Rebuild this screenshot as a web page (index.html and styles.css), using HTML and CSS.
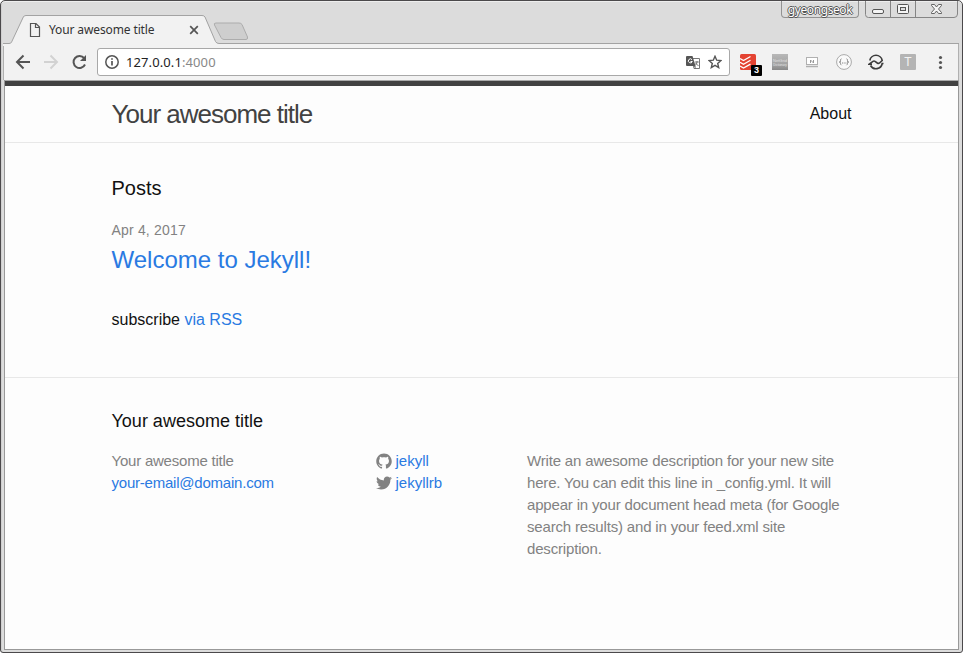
FILE: index.html
```html
<!DOCTYPE html>
<html lang="en">
<head>
<meta charset="utf-8">
<title>Your awesome title</title>
<link rel="stylesheet" href="styles.css">
</head>
<body>
<div class="window">
  <div class="titlebar">
    <svg class="tabs" width="260" height="31" viewBox="0 0 260 31">
      <path d="M0 31V28.500H7.500L20.800 2Q21.500 .5 23.500 .5H199Q201 .5 201.800 2L212.500 26.500Q213.500 28.500 216 28.500H260V31Z" fill="#f2f2f2"/>
      <path d="M0 28.500H6Q8 28.500 8.600 27L20.300 2Q21 .5 23 .5H199Q201.200 .5 202 2L212.500 26.500Q213.500 28.500 216 28.500H260" fill="none" stroke="#a3a3a3"/>
      <path d="M213 8H236Q238 8 239 9.500L244.500 22Q245 24.500 243 24.500H221Q219 24.500 218 22.500L211.500 10Q210.500 8 213 8Z" fill="#cecece" stroke="#acacac"/>
    </svg>
    <div class="tab">
      <svg width="12" height="16" viewBox="0 0 12 16" fill="none" stroke="#555" stroke-width="1.2"><path d="M1.500 1.500H7L10.500 5V14.500H1.500ZM6.500 1.500V5.500H10.500"/></svg>
      <span class="tab-name">Your awesome title</span>
      <svg width="10" height="10" viewBox="0 0 10 10" stroke="#555" stroke-width="1.700"><path d="M1.200 1.200l7.600 7.600M8.800 1.200L1.200 8.800"/></svg>
    </div>
    <div class="profile">gyeongseok</div>
    <div class="controls">
      <svg width="93" height="18" viewBox="0 0 93 18" fill="none" stroke="#858585">
        <path d="M.5 0V13.500Q.5 16.500 3.500 16.500H89Q92.500 16.500 92.500 13V0M25.500 0V16M50.500 0V16"/>
        <rect x="7.500" y="8.500" width="11" height="4" rx="1.500" fill="#f4f4f4" stroke="#555"/>
        <rect x="32.500" y="3.500" width="11" height="9" rx="1" fill="#f4f4f4" stroke="#555"/><rect x="35.500" y="6.500" width="5" height="3" fill="#ddd" stroke="#555"/>
        <path d="M66.500 3.500h3l2 2.500 2-2.500h3v1l-3 3.500 3 3.500v1h-3l-2-2.500-2 2.500h-3v-1l3-3.500-3-3.500z" fill="#f4f4f4" stroke="#555" stroke-width=".9"/>
      </svg>
    </div>
  </div>
  <div class="toolbar">
    <svg class="nav-icons" width="76" height="20" viewBox="0 0 76 20" fill="none" stroke="#555" stroke-width="2">
      <path d="M16 10H3.500M9.500 3.500L3 10l6.500 6.500"/>
      <path d="M30 10h12.500M36.500 3.500L43 10l-6.500 6.500" stroke="#d2d2d2"/>
      <path d="M70.200 6.200A6 6 0 1 0 71 12.500"/><path d="M72 3v6h-6z" fill="#555" stroke="none"/>
    </svg>
    <div class="omnibox">
      <svg width="14" height="14" viewBox="0 0 14 14" fill="none" stroke="#555" stroke-width="1.500"><circle cx="7" cy="7" r="6.200"/><path d="M7 6v4.500M7 3.200v1.600" stroke-width="1.700"/></svg>
      <span class="url">127.0.0.1<span class="port">:4000</span></span>
      <svg class="translate" width="14" height="13" viewBox="0 0 14 13"><path d="M6 2.500h7.500v10H8z" fill="#fff" stroke="#777"/><path d="M0 1q0-1 1-1h5.500l3 10H1q-1 0-1-1z" fill="#555"/><path d="M8 10l1.500 3V10z" fill="#555"/><path d="M6 3.700A2 2 0 1 0 6.300 5.500H4.500" fill="none" stroke="#fff"/><path d="M8.800 6h4M11 5v1q0 2-2 3.500M9.500 7l3 3" fill="none" stroke="#666" stroke-width=".9"/></svg>
      <svg class="star" width="14" height="14" viewBox="0 0 14 14"><path d="M7 1.300l1.700 3.900 4.200.4-3.200 2.800 1 4.200L7 10.400l-3.700 2.200 1-4.200L1.100 5.600l4.200-.4z" fill="none" stroke="#555" stroke-width="1.400"/></svg>
    </div>
    <div class="extensions">
      <div class="todo"><svg width="16" height="16" viewBox="0 0 16 16"><rect width="16" height="16" rx="1.500" fill="#e44332"/><path d="M0 4.500l3.500 2 7-4M0 8.300l3.500 2 7-4M0 12.100l3.500 2 7-4" fill="none" stroke="#fff" stroke-width="1.300"/></svg><span class="badge">3</span></div>
      <svg class="dictionary" width="16" height="16" viewBox="0 0 16 16"><g fill="#e2e2e2" font-family="Liberation Sans" text-anchor="middle"><text x="8" y="7.500" font-size="4">NetGrid</text><text x="8" y="11.500" font-size="3">Dictionary</text></g></svg>
      <svg width="16" height="16" viewBox="0 0 16 16" fill="none" stroke="#b0b0b0"><rect x="2.500" y="3.500" width="11" height="7" fill="#fff"/><path d="M2 12.500h12" stroke-width="1.500"/><path d="M6.500 9V6l3 3V6" stroke="#999"/></svg>
      <svg width="16" height="16" viewBox="0 0 16 16" fill="none" stroke="#aaa"><circle cx="8" cy="8" r="7.400" fill="#fafafa"/><path d="M5.500 4.800Q4.300 5 4.500 6.700T3.300 8q1.200 0 1.200 1.300t1 1.900M10.500 4.800q1.200.2 1 1.900T12.700 8q-1.200 0-1.200 1.300t-1 1.900" stroke="#888"/><path d="M6 9h1M7.700 9h1M9.400 9h1" stroke="#888"/></svg>
      <svg width="16" height="16" viewBox="0 0 16 16" fill="none" stroke="#3c3c3c" stroke-width="1.600"><path d="M1.800 6.500A6.300 6.300 0 0 1 14.200 6.500L11.500 9Q10.500 9.800 9.300 9L7 7.300Q6 6.600 5 7.300L.8 10.300H4M2.500 11.500A6.300 6.300 0 0 0 14.200 9.500H15.500"/></svg>
      <div class="t-icon">T</div>
      <svg width="16" height="16" viewBox="0 0 16 16" fill="#555"><circle cx="8.500" cy="3.500" r="1.600"/><circle cx="8.500" cy="8.500" r="1.600"/><circle cx="8.500" cy="13.500" r="1.600"/></svg>
    </div>
  </div>
  <div class="page">
    <header class="site-header"><div class="wrapper header-row">
      <a class="site-title">Your awesome title</a><nav>About</nav>
    </div></header>
    <main class="wrapper content">
      <h1>Posts</h1>
      <div class="post-meta">Apr 4, 2017</div>
      <h2><a>Welcome to Jekyll!</a></h2>
      <p class="rss">subscribe <a>via RSS</a></p>
    </main>
    <footer><div class="wrapper">
      <h3>Your awesome title</h3>
      <div class="columns">
        <div class="contact">Your awesome title<br><a>your-email@domain.com</a></div>
        <div>
          <div class="social"><svg width="16" height="16" viewBox="0 0 16 16"><path fill="#828282" d="M7.999,0.431c-4.285,0-7.760,3.474-7.760,7.761 c0,3.428,2.223,6.337,5.307,7.363c0.388,0.071,0.530-0.168,0.530-0.374c0-0.184-0.007-0.672-0.010-1.320 c-2.159,0.469-2.614-1.040-2.614-1.040c-0.353-0.896-0.862-1.135-0.862-1.135c-0.705-0.481,0.053-0.472,0.053-0.472 c0.779,0.055,1.189,0.800,1.189,0.800c0.692,1.186,1.816,0.843,2.258,0.645c0.071-0.502,0.271-0.843,0.493-1.037 C4.860,11.425,3.049,10.760,3.049,7.786c0-0.847,0.302-1.540,0.799-2.082C3.768,5.507,3.501,4.718,3.924,3.650 c0,0,0.652-0.209,2.134,0.796C6.677,4.273,7.340,4.187,8,4.184c0.659,0.003,1.323,0.089,1.943,0.261 c1.482-1.004,2.132-0.796,2.132-0.796c0.423,1.068,0.157,1.857,0.077,2.054c0.497,0.542,0.798,1.235,0.798,2.082 c0,2.981-1.814,3.637-3.543,3.829c0.279,0.240,0.527,0.713,0.527,1.437c0,1.037-0.010,1.874-0.010,2.129 c0,0.208,0.140,0.449,0.534,0.373c3.081-1.028,5.302-3.935,5.302-7.362C15.760,3.906,12.285,0.431,7.999,0.431z"/></svg><a>jekyll</a></div>
          <div class="social"><svg width="16" height="16" viewBox="0 0 16 16"><path fill="#828282" d="M15.969,3.058c-0.586,0.260-1.217,0.436-1.878,0.515c0.675-0.405,1.194-1.045,1.438-1.809c-0.632,0.375-1.332,0.647-2.076,0.793c-0.596-0.636-1.446-1.033-2.387-1.033c-1.806,0-3.270,1.464-3.270,3.270 c0,0.256,0.029,0.506,0.085,0.745C5.163,5.404,2.753,4.102,1.140,2.124C0.859,2.607,0.698,3.168,0.698,3.767 c0,1.134,0.577,2.135,1.455,2.722C1.616,6.472,1.112,6.325,0.671,6.080c0,0.014,0,0.027,0,0.041c0,1.584,1.127,2.906,2.623,3.206 C3.020,9.402,2.731,9.442,2.433,9.442c-0.211,0-0.416-0.021-0.615-0.059c0.416,1.299,1.624,2.245,3.055,2.271 c-1.119,0.877-2.529,1.400-4.061,1.400c-0.264,0-0.524-0.015-0.780-0.046c1.447,0.928,3.166,1.469,5.013,1.469 c6.015,0,9.304-4.983,9.304-9.304c0-0.142-0.003-0.283-0.009-0.423C14.976,4.290,15.531,3.714,15.969,3.058z"/></svg><a>jekyllrb</a></div>
        </div>
        <p class="description">Write an awesome description for your new site here. You can edit this line in _config.yml. It will appear in your document head meta (for Google search results) and in your feed.xml site description.</p>
      </div>
    </div></footer>
  </div>
</div>
</body>
</html>
```
FILE: styles.css
```css
* { box-sizing: border-box; }
body { margin: 0; overflow: hidden; background: #fff; font-family: "Liberation Sans", Arial, sans-serif; }
h1, h2, h3, p { margin: 0; font-weight: 400; }
svg { display: block; flex: none; }
.window { width: 963px; height: 653px; display: flex; flex-direction: column; border: 1px solid #4b494b; border-radius: 5px 5px 3px 3px; background: #dcdcdc; padding: 0 3px 2px 2px; box-shadow: inset 0 1px #eee, inset 1px 0 #d0d0d0; }
.titlebar { flex: none; height: 43px; position: relative; display: flex; }
.tabs { position: absolute; left: 0; top: 14px; z-index: 1; }
.titlebar::after { content: ""; position: absolute; left: 259px; right: 0; top: 42px; border-top: 1px solid #a3a3a3; }
.tab { position: relative; z-index: 2; display: flex; align-items: center; width: 170px; height: 16px; margin: 21px 0 0 26px; }
.tab-name { flex: 1; margin-left: 8px; font: 12px/16px "Noto Sans", sans-serif; letter-spacing: -.12px; color: #333; white-space: nowrap; }
.profile { margin: 0 6px 0 auto; width: 78px; height: 17px; border: 1px solid #929292; border-top: 0; border-radius: 0 0 4px 4px; font: 12px/17px "Noto Sans", sans-serif; letter-spacing: -.4px; text-align: center; color: #fff; text-shadow: -1px 0 #555, 1px 0 #555, 0 -1px #555, 0 1px #555; }
.controls { margin-right: 1px; }
.toolbar { flex: none; height: 36px; display: flex; align-items: center; background: #f2f2f2; border-left: 1px solid #b0b0b0; border-right: 1px solid #b0b0b0; padding-left: 10px; }
.nav-icons { margin-right: 7px; }
.omnibox { width: 633px; height: 28px; display: flex; align-items: center; background: #fff; border: 1px solid #a8a8a8; border-radius: 3px; padding: 0 7px; }
.url { margin-left: 7px; font: 13px/20px "Noto Sans", sans-serif; letter-spacing: .1px; color: #222; }
.port { color: #888; }
.translate { margin-left: auto; }
.star { margin-left: 8px; }
.extensions { display: flex; gap: 16px; margin-left: 10px; }
.todo { position: relative; width: 16px; height: 16px; }
.badge { position: absolute; left: 11px; top: 11px; width: 11px; height: 11px; border-radius: 1px; background: #000; color: #fff; font: 700 9px/11px "Liberation Sans", sans-serif; text-align: center; }
.dictionary { background: linear-gradient(#b8b8b8, #a0a0a0 70%, #888); }
.t-icon { width: 16px; height: 16px; border-radius: 1px; background: #b4b4b4; color: #f3f3f3; font: 12px/16px "Liberation Sans", sans-serif; text-align: center; }
.page { flex: 1; margin: 0 0 0 2px; background: #fdfdfd; border-top: 1px solid #aaa; border-right: 1px solid #999; border-bottom: 1px solid #999; box-shadow: -1px 0 #999; color: #111; }
.page a { color: #2a7ae2; }
.wrapper { width: 740px; margin: 0 0 0 106.5px; }
.site-header { height: 62px; border-top: 5px solid #424242; border-bottom: 1px solid #e8e8e8; }
.header-row { display: flex; justify-content: space-between; line-height: 56px; }
.page .site-title { font-size: 26px; letter-spacing: -1px; color: #424242; }
nav { font-size: 16px; line-height: 56px; }
.content { padding: 30px 0 45px; }
h1 { font-size: 20px; line-height: 30px; margin-bottom: 15px; }
.post-meta { font-size: 14px; line-height: 24px; letter-spacing: .18px; color: #828282; }
h2 { font-size: 24px; line-height: 36px; margin-bottom: 30px; }
.rss { font-size: 16px; line-height: 24px; }
footer { border-top: 1px solid #e8e8e8; padding-top: 30px; }
h3 { font-size: 18px; line-height: 27px; margin-bottom: 15px; }
.columns { display: grid; grid-template-columns: 264px 151.5px 324px; font-size: 15px; line-height: 22px; color: #828282; }
.contact { letter-spacing: -.22px; }
.description { letter-spacing: -.17px; }
.social { display: flex; align-items: center; gap: 4px; height: 22px; }
```
